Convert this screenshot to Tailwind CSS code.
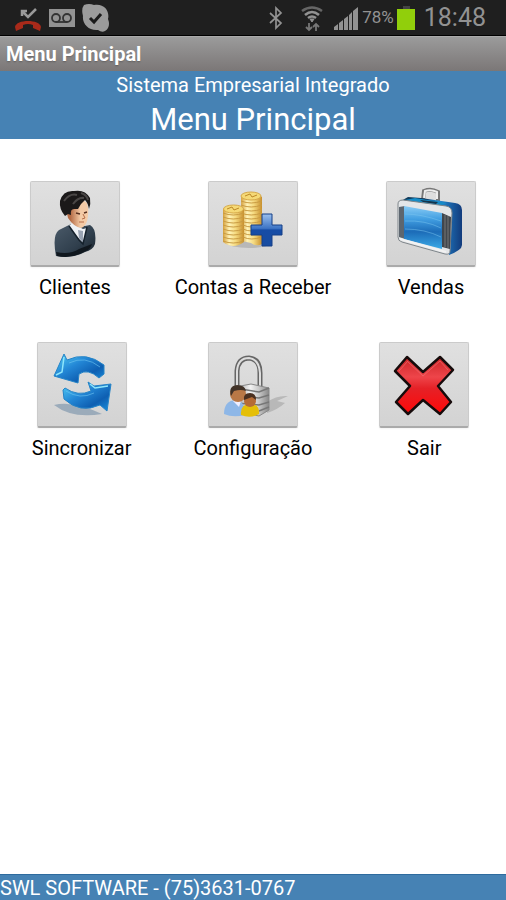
<!DOCTYPE html>
<html lang="pt-BR">
<head>
<meta charset="utf-8">
<meta name="viewport" content="width=device-width, initial-scale=1">
<title>Menu Principal</title>
<script src="https://cdn.jsdelivr.net/npm/@tailwindcss/browser@4"></script>
</head>
<body class="flex min-h-screen flex-col bg-white font-[Roboto,'Liberation_Sans',sans-serif] text-xl text-black">
<!-- Status bar -->
<div class="flex h-9 items-center justify-between border-b border-black bg-[#1f1f1f] pr-5 pl-3.5 text-[#929292]">
  <div class="flex items-center gap-1.5">
    <svg class="h-7 w-7" viewBox="0 0 28 28" aria-label="Chamada perdida">
      <path d="M1 24C2 16 26 16 27 24L26 28L19 25V22Q14 20 9 22V25L2 28Z" fill="#a82a1a" transform="translate(0 -1)"/>
      <path d="M8 7L14 13L22 5M8 12V7H13" fill="none" stroke="#999" stroke-width="2.5"/>
    </svg>
    <svg class="h-7 w-7" viewBox="0 0 28 28" aria-label="Correio de voz">
      <path d="M1 5H27V23H1Z" fill="#929292"/>
      <g fill="none" stroke="#333" stroke-width="1.8"><circle cx="8" cy="14" r="4"/><circle cx="19" cy="14" r="4"/><path d="M8 18H19"/></g>
    </svg>
    <svg class="h-7 w-7" viewBox="0 0 28 28" aria-label="Disponível">
      <path d="M2 1Q7-1 12 1C22-1 28 7 26 15Q29 23 23 27Q20 29 16 26C7 27 0 20 1 12Q-1 5 2 1Z" fill="#9b9b9b"/>
      <path d="M8 14L12 18L19 10" fill="none" stroke="#1b1b1b" stroke-width="3"/>
    </svg>
  </div>
  <div class="flex items-center">
    <svg class="mr-4 h-6 w-4" viewBox="0 0 16 24" fill="none" stroke="currentColor" stroke-width="1.7" aria-label="Bluetooth"><path d="M2 7L13 17L8 22V2L13 7L2 17"/></svg>
    <svg class="mr-2.5 h-7 w-6" viewBox="0 0 24 28" fill="none" stroke="currentColor" stroke-width="2.6" aria-label="Wi-Fi">
      <path d="M2 7Q12 0 22 7" stroke="#666"/><path d="M5 11Q12 5 19 11M8 14Q12 11 16 14"/><path d="M10 15L12 18L14 15Z" fill="currentColor" stroke-width="1"/>
      <path d="M9 19V26M6 23L9 26L12 23M16 27V20M13 23L16 20L19 23" stroke="#777" stroke-width="1.8"/>
    </svg>
    <svg class="mr-1 h-6 w-6" viewBox="0 0 24 24" fill="currentColor" aria-label="Sinal"><path d="M0 24V21L4 18V24ZM5 24V17L9 14V24ZM10 24V13L14 10V24ZM15 24V9L18 6V24ZM19 24V5L24 1V24Z"/></svg>
    <span class="text-[17px]">78%</span>
    <svg class="mr-2 ml-0.5 h-6 w-5" viewBox="0 0 20 24" aria-label="Bateria"><path d="M7 0H14V3H7Z" fill="#444"/><path d="M1 3H19V24H1Z" fill="#91cf0b"/></svg>
    <span class="text-[25px]">18:48</span>
  </div>
</div>
<!-- Title bar -->
<div class="flex h-[35px] items-center border-t border-[#aaa] bg-linear-to-b from-[#9b9b9b] to-[#7b7777] px-1.5 font-bold text-white text-shadow-sm">Menu Principal</div>
<header class="flex flex-col items-center bg-[#4682b4] pt-0.5 text-white">
  <p class="leading-6">Sistema Empresarial Integrado</p>
  <h1 class="pt-1 text-[31px] leading-[38px]">Menu Principal</h1>
</header>

<main class="flex flex-1 flex-col gap-[43px] pt-[42px]">
  <div class="grid grid-cols-3 justify-items-center gap-7">
    <div class="flex flex-col items-center gap-2">
      <button aria-labelledby="l1" class="flex h-[86px] w-[90px] items-center justify-center rounded-xs border border-b-2 border-[#cbcbcb] border-b-[#aaa] bg-linear-to-b from-[#e0e0e0] to-[#d3d3d3] shadow-xs">
        <svg class="h-20 w-20" viewBox="0 0 80 80">
          <defs>
            <linearGradient id="skin"><stop offset=".2" stop-color="#b56c46"/><stop offset=".65" stop-color="#f4cba7"/></linearGradient>
            <linearGradient id="suit" x2="1" y2="1"><stop stop-color="#4b5b6a"/><stop offset=".6" stop-color="#303f4d"/><stop offset="1" stop-color="#18212a"/></linearGradient>
          </defs>
          <path d="M21 72Q17 51 24 46L36 40L50 42L55 41Q62 45 60 60Q58 66 50 68Q38 75 21 72Z" fill="url(#suit)"/>
          <path d="M21 68Q35 71 44 65L57 60Q56 65 49 68Q36 75 22 72Z" fill="#10171e"/>
          <path d="M34 42L37 39L48 45L52 44L48 59L41 52Z" fill="#eef1f5"/>
          <path d="M43 46L48 47V59L44 54Z" fill="#9aa4b4"/>
          <path d="M34 42L44 56L48 60L52 43" fill="none" stroke="#14202b" stroke-width="1.5"/>
          <path d="M31 25L45 14L52 19Q54 26 53 32Q52 42 46 44Q39 43 33 34Z" fill="url(#skin)"/>
          <path d="M30 32Q24 25 25 17Q28 6 39 7Q50 5 55 14Q56 20 54 25Q53 19 50 16Q45 20 43 25L39 25Q35 25 36 31L33 30Z" fill="#1b1919"/>
          <path d="M29 17Q35 9 42 11M38 20Q43 13 49 14M46 9Q52 11 53 16" fill="none" stroke="#4a4746" stroke-width="2"/>
          <path d="M41 29L45 30M49 29L52 28" stroke="#583020" stroke-width="1.5"/>
          <path d="M48 30L50 34L47 35M44 38L49 38" fill="none" stroke="#b56d48"/>
        </svg>
      </button>
      <span id="l1" class="leading-6">Clientes</span>
    </div>
    <div class="flex flex-col items-center gap-2">
      <button aria-labelledby="l2" class="flex h-[86px] w-[90px] items-center justify-center rounded-xs border border-b-2 border-[#cbcbcb] border-b-[#aaa] bg-linear-to-b from-[#e0e0e0] to-[#d3d3d3] shadow-xs">
        <svg class="h-20 w-20" viewBox="0 0 80 80">
          <defs>
            <linearGradient id="gold"><stop stop-color="#d59f3a"/><stop offset=".3" stop-color="#fff3b8"/><stop offset=".6" stop-color="#f5da80"/><stop offset="1" stop-color="#c88f2c"/></linearGradient>
            <linearGradient id="plus" x2="0" y2="1"><stop stop-color="#9bc0ee"/><stop offset=".45" stop-color="#3c73c4"/><stop offset=".5" stop-color="#164ca6"/><stop offset="1" stop-color="#184ca0"/></linearGradient>
          </defs>
          <ellipse cx="36" cy="59" rx="22" ry="5" fill="#999" opacity=".5"/>
          <path d="M28 13Q38 4 49 13V60Q44 63 38 59L29 57Z" fill="url(#gold)"/>
          <path d="M28 17Q38 21 49 17M28 21Q38 25 49 21M28 25Q38 29 49 25M28 29Q38 33 49 29M28 33Q38 37 49 33M28 37Q38 41 49 37M30 41Q38 45 49 41M30 45Q38 49 49 45M30 49Q38 53 49 49M30 53Q38 57 49 53" fill="none" stroke="#c99b42"/>
          <ellipse cx="38" cy="12" rx="10" ry="4" fill="#f5d976" stroke="#d6a94a"/>
          <path d="M10 25Q20 18 31 25V58Q20 66 10 58Z" fill="url(#gold)"/>
          <path d="M10 29Q20 33 31 29M10 33Q20 37 31 33M10 37Q20 41 31 37M10 41Q20 45 31 41M10 45Q20 49 31 45M10 49Q20 53 31 49M10 53Q20 57 31 53M10 57Q20 61 31 57" fill="none" stroke="#c99b42"/>
          <ellipse cx="20.500" cy="25" rx="10" ry="4" fill="#f5d976" stroke="#d6a94a"/>
          <path d="M14 25L19 23L21 26L26 24M32 12L37 10L39 13L44 11" fill="none" stroke="#bd8827"/>
          <path d="M49 30H59V41H69V51H59V62H49V51H38V41H49Z" fill="url(#plus)" stroke="#153f87"/>
        </svg>
      </button>
      <span id="l2" class="leading-6 whitespace-nowrap">Contas a Receber</span>
    </div>
    <div class="flex flex-col items-center gap-2">
      <button aria-labelledby="l3" class="flex h-[86px] w-[90px] items-center justify-center rounded-xs border border-b-2 border-[#cbcbcb] border-b-[#aaa] bg-linear-to-b from-[#e0e0e0] to-[#d3d3d3] shadow-xs">
        <svg class="h-20 w-20" viewBox="0 0 80 80">
          <defs>
            <linearGradient id="case" x2="0" y2="1"><stop stop-color="#8accf5"/><stop offset=".3" stop-color="#429fe2"/><stop offset=".6" stop-color="#1c6cb8"/><stop offset="1" stop-color="#3ba9e6"/></linearGradient>
            <linearGradient id="side"><stop stop-color="#12415f"/><stop offset=".4" stop-color="#0d3155"/><stop offset=".6" stop-color="#248fd8"/><stop offset="1" stop-color="#123b7c"/></linearGradient>
          </defs>
          <path d="M32 16L33 7Q40 4 47 8V17" fill="none" stroke="#777" stroke-width="4"/>
          <path d="M33 14L34 7Q40 5 46 8V15" fill="none" stroke="#eee" stroke-width="2"/>
          <path d="M10 17L17 13L30 14L64 19Q71 20 71 26V61Q71 66 58 71L52 25Z" fill="url(#side)"/>
          <path d="M14 16L24 14L56 19L47 22Z" fill="#168cc7"/>
          <path d="M29 16L47 18L45 20L32 18Z" fill="#15354d"/>
          <path d="M7 20Q7 16 12 16L55 22Q61 23 61 29L59 67Q59 71 54 70L11 58Q7 57 7 53Z" fill="#e4e6e8" stroke="#7e858a"/>
          <path d="M8 23L14 22V55L8 53Z" fill="#5d666f"/>
          <path d="M13 22L51 29V65L13 55Z" fill="url(#case)"/>
          <path d="M51 29L60 33L59 65L51 63Z" fill="#41464c"/>
          <path d="M54 31V63M57 32V64" stroke="#777"/>
          <path d="M14 30Q30 30 50 37M14 37Q34 36 50 44M14 45Q34 45 50 53" fill="none" stroke="#79c5f0" opacity=".5"/>
          <path d="M9 55L55 68" fill="none" stroke="#f2f2f2" stroke-width="2"/>
        </svg>
      </button>
      <span id="l3" class="leading-6">Vendas</span>
    </div>
  </div>
  <div class="grid grid-cols-3 justify-items-center gap-2">
    <div class="flex flex-col items-center gap-2">
      <button aria-labelledby="l4" class="flex h-[86px] w-[90px] items-center justify-center rounded-xs border border-b-2 border-[#cbcbcb] border-b-[#aaa] bg-linear-to-b from-[#e0e0e0] to-[#d3d3d3] shadow-xs">
        <svg class="h-20 w-20" viewBox="0 0 80 80">
          <defs>
            <linearGradient id="arrow" x2="1" y2="1"><stop stop-color="#55d2f7"/><stop offset=".4" stop-color="#2387d6"/><stop offset=".7" stop-color="#0e5fb2"/><stop offset="1" stop-color="#1b92df"/></linearGradient>
          </defs>
          <path d="M12 60Q30 55 60 69Q30 74 12 60Z" fill="#55779a" opacity=".45"/>
          <path d="M22 9L25 15Q44 6 62 20L62 29L57 33Q46 23 37 29L36 38L12 31Z" fill="url(#arrow)" stroke="#2584c7"/>
          <path d="M46 37L52 41L69 39L65 66L58 60Q38 69 22 54L21 45L23 43Q36 52 49 46Z" fill="url(#arrow)" stroke="#2584c7"/>
          <path d="M22 12L20 27L14 30M48 39L53 43L66 41" fill="none" stroke="#8ee6fb" stroke-width="1.500"/>
          <path d="M27 18Q43 10 58 22M24 46Q38 55 52 48" fill="none" stroke="#6fc6f2" opacity=".6"/>
        </svg>
      </button>
      <span id="l4" class="leading-6">Sincronizar</span>
    </div>
    <div class="flex flex-col items-center gap-2">
      <button aria-labelledby="l5" class="flex h-[86px] w-[90px] items-center justify-center rounded-xs border border-b-2 border-[#cbcbcb] border-b-[#aaa] bg-linear-to-b from-[#e0e0e0] to-[#d3d3d3] shadow-xs">
        <svg class="h-20 w-20" viewBox="0 0 80 80">
          <defs>
            <linearGradient id="lock" x2="1"><stop stop-color="#999"/><stop offset=".45" stop-color="#f2f2f2"/><stop offset=".7" stop-color="#c8c8c8"/><stop offset="1" stop-color="#888"/></linearGradient>
          </defs>
          <path d="M54 57Q64 50 75 51L64 56L72 58Q64 65 54 68Z" fill="#999" opacity=".5"/>
          <path d="M24 46V26Q25 13 36 13Q47 14 47 28V44" fill="none" stroke="#666" stroke-width="5"/>
          <path d="M24 44V26Q25 13 36 13Q46 14 47 28V42" fill="none" stroke="#ddd" stroke-width="2"/>
          <path d="M22 42L38 39L56 43V65L46 71L22 66Z" fill="url(#lock)" stroke="#888"/>
          <path d="M22 43L46 47L56 43M24 51L46 53L56 50M24 58L46 60L56 57M46 66L56 62" fill="none" stroke="#777" stroke-width="1.500"/>
          <path d="M11 69Q11 56 22 55Q32 55 32 70Q20 73 11 69Z" fill="#8eb7e7"/>
          <path d="M20 56L26 62L28 56" fill="#eef"/>
          <circle cx="25" cy="49" r="8" fill="#b97846"/>
          <path d="M18 51Q15 41 24 40Q32 40 33 46Q28 44 21 46Z" fill="#423328"/>
          <path d="M28 70Q27 59 37 59Q47 59 46 69Q37 74 28 70Z" fill="#e5bf08"/>
          <circle cx="37" cy="56" r="6" fill="#b66c36"/>
          <path d="M31 55Q30 48 37 48Q43 48 43 55L39 52Z" fill="#4a3020"/>
        </svg>
      </button>
      <span id="l5" class="leading-6">Configuração</span>
    </div>
    <div class="flex flex-col items-center gap-2">
      <button aria-labelledby="l6" class="flex h-[86px] w-[90px] items-center justify-center rounded-xs border border-b-2 border-[#cbcbcb] border-b-[#aaa] bg-linear-to-b from-[#e0e0e0] to-[#d3d3d3] shadow-xs">
        <svg class="h-20 w-20" viewBox="0 0 80 80">
          <defs>
            <linearGradient id="red" x2="0" y2="1"><stop stop-color="#cc2427"/><stop offset=".35" stop-color="#ee454a"/><stop offset=".55" stop-color="#e52127"/><stop offset="1" stop-color="#ff0808"/></linearGradient>
          </defs>
          <path d="M23 12L39 27L56 12L69 25L54 41L67 57L56 69L39 55L24 69L12 57L26 41L11 26Z" fill="url(#red)" stroke="#160b0b" stroke-width="2.500" stroke-linejoin="round"/>
          <path d="M23 16L39 31L56 16L64 25M15 26L23 17" fill="none" stroke="#ef777a" opacity=".6"/>
        </svg>
      </button>
      <span id="l6" class="leading-6">Sair</span>
    </div>
  </div>
</main>
<footer class="border-t border-[#2e6b9e] bg-[#4682b4] pt-px leading-6 text-white">SWL SOFTWARE - (75)3631-0767</footer>
</body>
</html>
